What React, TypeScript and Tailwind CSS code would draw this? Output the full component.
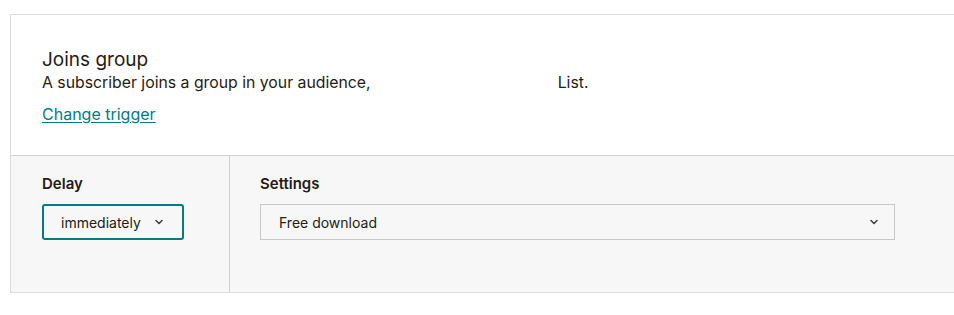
import React from 'react';

const Chevron: React.FC = () => (
  <svg width="8" height="6" viewBox="0 0 8 6" className="text-[#444]">
    <path d="M1 1.5 L4 4.5 L7 1.5" fill="none" stroke="currentColor" strokeWidth="1.6" strokeLinecap="round" strokeLinejoin="round" />
  </svg>
);

const App: React.FC = () => {
  return (
    <div className="w-[954px] h-[315px] bg-white overflow-hidden pt-[14px] pl-[10px]" style={{ fontFamily: 'Inter, "Liberation Sans", Arial, sans-serif' }}>
      <div className="w-[1000px] border border-[#dcdcdc] text-[#241c15]">
        {/* Trigger */}
        <div className="bg-white px-[31px] pt-[33px] pb-[29px]">
          <h2 className="text-[19px] leading-[24px]">Joins group</h2>
          <p className="text-[15.8px] leading-[22px] flex">
            <span>A subscriber joins a group in your audience,</span>
            <span className="ml-[187px]">List.</span>
          </p>
          <a href="#" className="inline-block mt-[10px] text-[16px] leading-[20px] text-[#007c89] underline underline-offset-2">
            Change trigger
          </a>
        </div>

        {/* Settings row */}
        <div className="flex bg-[#f7f7f7] border-t border-[#d0d0d0] h-[137px]">
          <div className="w-[219px] border-r border-[#d0d0d0] px-[31px] pt-[18px]">
            <div className="text-[15px] font-semibold leading-[20px] text-[#241c15]">Delay</div>
            <button className="mt-[10px] w-[142px] h-[36px] border-2 border-[#007c89] rounded-[3px] bg-[#f7f7f7] flex items-center pl-[17px] gap-[14px] text-[14px] text-[#241c15]">
              <span>immediately</span>
              <Chevron />
            </button>
          </div>
          <div className="pl-[30px] pt-[18px]">
            <div className="text-[15px] font-semibold leading-[20px] text-[#241c15]">Settings</div>
            <button className="mt-[10px] w-[635px] h-[36px] border border-[#c7c7c7] bg-[#f7f7f7] flex items-center justify-between pl-[18px] pr-[16px] text-[14px] text-[#241c15]">
              <span>Free download</span>
              <Chevron />
            </button>
          </div>
        </div>
      </div>
    </div>
  );
};

export default App;
